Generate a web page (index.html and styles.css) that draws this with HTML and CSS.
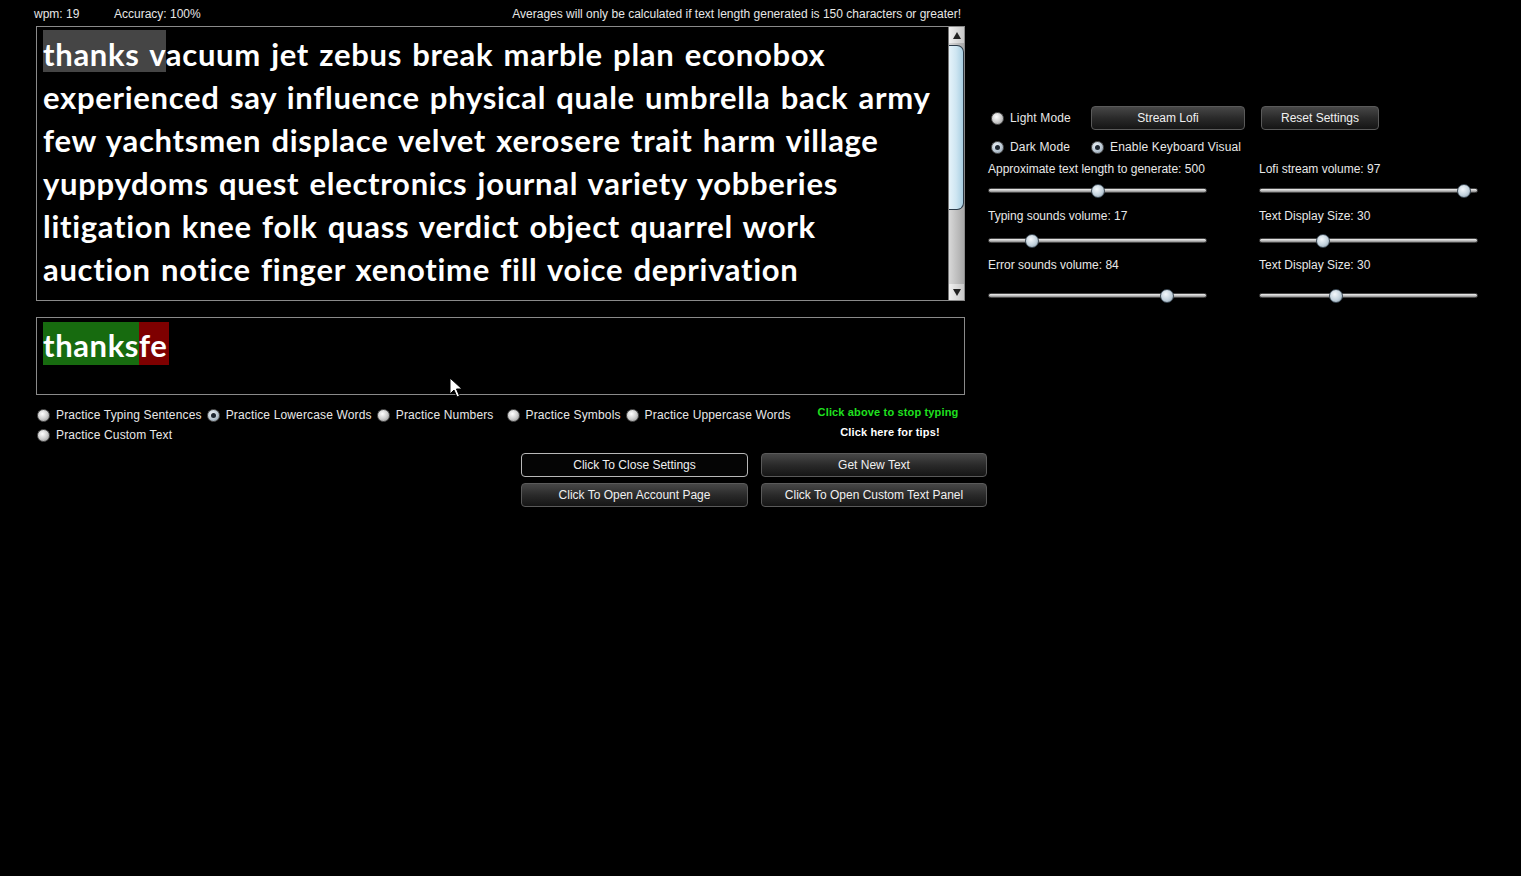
FILE: index.html
```html
<!DOCTYPE html>
<html>
<head>
<meta charset="utf-8">
<title>Typing Practice</title>
<link rel="stylesheet" href="styles.css">
</head>
<body>
<div class="app">
  <div class="top">
    <div class="left">
      <div class="status">
        <span class="wpm">wpm: 19</span>
        <span class="acc">Accuracy: 100%</span>
        <span class="note">Averages will only be calculated if text length generated is 150 characters or greater!</span>
      </div>
      <div class="textbox">
        <div class="words">
          <div class="line"><span class="cur">thanks </span>vacuum jet zebus break marble plan econobox</div>
          <div class="line">experienced say influence physical quale umbrella back army</div>
          <div class="line">few yachtsmen displace velvet xerosere trait harm village</div>
          <div class="line">yuppydoms quest electronics journal variety yobberies</div>
          <div class="line">litigation knee folk quass verdict object quarrel work</div>
          <div class="line">auction notice finger xenotime fill voice deprivation</div>
          <div class="line">surmount bright lambda bulk gamma monitor xylem hold</div>
        </div>
        <div class="scrollbar">
          <div class="sb-btn"><span class="tri up"></span></div>
          <div class="sb-track">
            <div class="sb-thumb"></div>
          </div>
          <div class="sb-btn"><span class="tri down"></span></div>
        </div>
      </div>
      <div class="inputbox">
        <span class="ok">thanks</span><span class="bad">fe</span>
      </div>
      <div class="modes">
        <div class="radios">
          <div class="row">
            <label class="radio"><span class="dot"></span>Practice Typing Sentences</label>
            <label class="radio"><span class="dot on"></span>Practice Lowercase Words</label>
            <label class="radio wide"><span class="dot"></span>Practice Numbers</label>
            <label class="radio"><span class="dot"></span>Practice Symbols</label>
            <label class="radio"><span class="dot"></span>Practice Uppercase Words</label>
          </div>
          <div class="row">
            <label class="radio"><span class="dot"></span>Practice Custom Text</label>
          </div>
        </div>
        <div class="tips">
          <div class="stop">Click above to stop typing</div>
          <div class="help">Click here for tips!</div>
        </div>
      </div>
    </div>
    <div class="right">
      <div class="opts">
        <label class="radio"><span class="dot"></span>Light Mode</label>
        <button class="btn lofi">Stream Lofi</button>
        <button class="btn reset">Reset Settings</button>
        <label class="radio"><span class="dot on"></span>Dark Mode</label>
        <label class="radio kb"><span class="dot on"></span>Enable Keyboard Visual</label>
      </div>
      <div class="sliders">
        <div class="slider s1">
          <div class="slabel">Approximate text length to generate: 500</div>
          <div class="track"><span class="thumb" style="left:102px"></span></div>
        </div>
        <div class="slider s1">
          <div class="slabel">Lofi stream volume: 97</div>
          <div class="track"><span class="thumb" style="left:197px"></span></div>
        </div>
        <div class="slider s2">
          <div class="slabel">Typing sounds volume: 17</div>
          <div class="track"><span class="thumb" style="left:36px"></span></div>
        </div>
        <div class="slider s2">
          <div class="slabel">Text Display Size: 30</div>
          <div class="track"><span class="thumb" style="left:56px"></span></div>
        </div>
        <div class="slider s3">
          <div class="slabel">Error sounds volume: 84</div>
          <div class="track"><span class="thumb" style="left:171px"></span></div>
        </div>
        <div class="slider s3">
          <div class="slabel">Text Display Size: 30</div>
          <div class="track"><span class="thumb" style="left:69px"></span></div>
        </div>
      </div>
    </div>
  </div>
  <div class="buttons">
    <button class="btn big active">Click To Close Settings</button>
    <button class="btn big">Get New Text</button>
    <button class="btn big">Click To Open Account Page</button>
    <button class="btn big">Click To Open Custom Text Panel</button>
  </div>
</div>
<svg class="cursor" width="14" height="22" viewBox="0 0 14 22">
  <path d="M1 1 L1 17 L5 13 L8 20 L10.5 19 L7.5 12 L13 12 Z" fill="#fff" stroke="#000" stroke-width="1"/>
</svg>
</body>
</html>
```

FILE: styles.css
```css
* { box-sizing: border-box; }
html { margin: 0; padding: 0; background: #000; }
body {
  margin: 0;
  padding: 0;
  width: 1521px;
  height: 876px;
  overflow: hidden;
  font-family: "Liberation Sans", Arial, sans-serif;
  font-size: 12px;
  color: #e8e8e8;
  position: relative;
}
.app { padding-left: 36px; }
.top { display: flex; }
.left { width: 929px; }
.status {
  height: 26px;
  display: flex;
  align-items: center;
  margin-left: -2px;
  padding-right: 4px;
  padding-top: 1px;
  color: #e6e6e6;
}
.status .wpm { width: 80px; }
.status .note { margin-left: auto; }

.textbox {
  height: 275px;
  border: 1px solid #8a8a8a;
  display: flex;
  overflow: hidden;
}
.words {
  flex: 1;
  position: relative;
  z-index: 0;
  padding: 6px 0 0 6px;
  overflow: hidden;
  font-family: "Lato", "Open Sans", sans-serif;
  font-weight: 700;
  font-size: 31px;
  line-height: 43px;
  letter-spacing: 0.7px;
  word-spacing: 2px;
  color: #fff;
  white-space: nowrap;
}
.line { height: 43px; }
.cur { position: relative; }
.cur::before {
  content: "";
  position: absolute;
  left: 0;
  top: -5px;
  width: 123px;
  height: 42px;
  background: #454545;
  z-index: -1;
}

.scrollbar {
  width: 16px;
  display: flex;
  flex-direction: column;
  background: linear-gradient(90deg, #e4e4e4, #b4b4b4);
  border-left: 1px solid #777;
}
.sb-btn {
  height: 16px;
  display: flex;
  align-items: center;
  justify-content: center;
  background: linear-gradient(90deg, #f0f0f0, #c8c8c8);
}
.tri { width: 0; height: 0; border-left: 4px solid transparent; border-right: 4px solid transparent; }
.tri.up { border-bottom: 7px solid #222; }
.tri.down { border-top: 7px solid #222; }
.sb-track {
  flex: 1;
  padding-top: 2px;
  background: linear-gradient(90deg, #d8d8d8, #a8a8a8);
}
.sb-thumb {
  height: 165px;
  background: linear-gradient(90deg, #e6f3fa, #cfe6f2 50%, #a9cfe2);
  border: 1px solid #2b3a48;
  border-left: none;
  border-radius: 0 7px 7px 0;
}

.inputbox {
  margin-top: 16px;
  height: 78px;
  border: 1px solid #8a8a8a;
  padding: 4px 6px;
  font-family: "Lato", "Open Sans", sans-serif;
  font-weight: 700;
  font-size: 31px;
  line-height: 43px;
  letter-spacing: 0.6px;
  color: #fff;
  display: flex;
  align-items: flex-start;
  white-space: nowrap;
}
.ok { background: #176b0f; height: 43px; padding-top: 2px; line-height: 43px; }
.bad { background: #7e0000; height: 43px; padding-top: 2px; line-height: 43px; padding-right: 2px; }

.modes { display: flex; padding-top: 10px; }
.radios { width: 775px; }
.row { display: flex; height: 20px; align-items: center; }
.radio {
  display: inline-flex;
  align-items: center;
  color: #e8e8e8;
  white-space: nowrap;
  margin-right: 6px;
  letter-spacing: 0.15px;
}
.radios .radio { padding-left: 1px; margin-right: 4px; }
.radios .radio.wide { margin-right: 12px; }
.dot {
  width: 13px;
  height: 13px;
  border-radius: 50%;
  background: radial-gradient(circle at 40% 35%, #ffffff, #cfcfcf 50%, #8d8d8d);
  border: 1px solid #555;
  margin-right: 6px;
  position: relative;
  flex: none;
}
.dot.on { background: radial-gradient(circle at 40% 35%, #f0f4f8, #b8c6d2 55%, #7c8c98); }
.dot.on::after {
  content: "";
  position: absolute;
  left: 3px; top: 3px;
  width: 5px; height: 5px;
  border-radius: 50%;
  background: #1d2630;
}
.tips {
  flex: 1;
  text-align: center;
  font-size: 11px;
  font-weight: 700;
  letter-spacing: 0.15px;
  margin-top: -3px;
}
.stop { color: #1fe11f; height: 20px; line-height: 20px; }
.help { color: #fff; height: 20px; line-height: 20px; padding-left: 4px; }

.btn {
  font-family: "Liberation Sans", Arial, sans-serif;
  font-size: 12px;
  color: #f0f0f0;
  height: 24px;
  border: 1px solid #5a5a5a;
  border-radius: 4px;
  background: linear-gradient(#474747, #2a2a2a 50%, #151515);
  padding: 0;
  cursor: default;
}
.btn.active { background: #050505; border-color: #b8b8b8; }

.buttons {
  display: grid;
  grid-template-columns: 227px 226px;
  column-gap: 13px;
  row-gap: 6px;
  margin-left: 485px;
  margin-top: 8px;
}

.right { padding-left: 23px; padding-top: 105px; width: 520px; }
.opts {
  display: grid;
  grid-template-columns: 103px 170px 118px;
  grid-template-rows: 25px 25px;
  row-gap: 4px;
  align-items: center;
}
.opts .radio { padding-left: 3px; padding-top: 1px; }
.opts .radio.kb { padding-left: 0; grid-column: 2 / span 2; }
.lofi { width: 154px; }
.reset { width: 118px; }

.sliders {
  display: grid;
  grid-template-columns: 219px 219px;
  column-gap: 52px;
  margin-top: 3px;
}
.slabel { height: 14px; line-height: 14px; white-space: nowrap; }
.track {
  position: relative;
  height: 5px;
  border-radius: 3px;
  background: linear-gradient(#f0f0f0, #c4c4c4 50%, #8c8c8c);
  border: 1px solid #444;
}
.thumb {
  position: absolute;
  top: -5px;
  width: 14px;
  height: 14px;
  border-radius: 50%;
  background: radial-gradient(circle at 40% 35%, #f4f8fb, #c3d2dd 55%, #8597a5);
  border: 1px solid #3d4a55;
}
.s1 { height: 47px; }
.s1 .track { margin-top: 12px; }
.s2 { height: 49px; }
.s2 .track { margin-top: 15px; }
.s3 .track { margin-top: 21px; }

.cursor { position: absolute; left: 449px; top: 377px; }
```
